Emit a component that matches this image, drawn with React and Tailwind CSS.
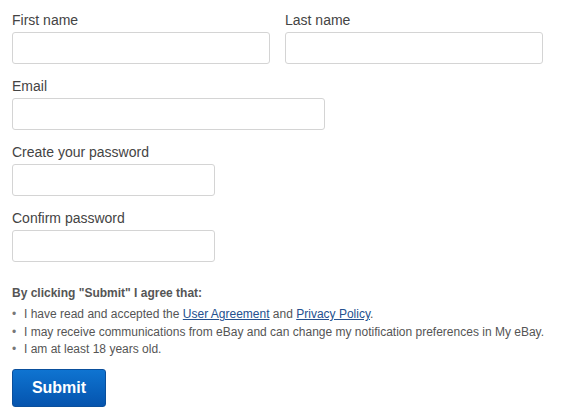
import React from 'react';

const Field = ({ label, width, className = '' }) => (
    <div className={className}>
        <label className="block text-[14px] leading-[16px] text-[#444]">{label}</label>
        <input
            type="text"
            className={`mt-[4px] block h-[32px] ${width} rounded-[3px] border border-[#d4d4d4] bg-white outline-none`}
        />
    </div>
);

const App = () => {
    return (
        <div className="h-[419px] w-[568px] bg-white px-[12px] pt-[12px]" style={{ fontFamily: '"Liberation Sans", Arial, sans-serif' }}>
            {/* Name row */}
            <div className="flex gap-[15px]">
                <Field label="First name" width="w-[258px]" />
                <Field label="Last name" width="w-[258px]" />
            </div>

            <Field label="Email" width="w-[313px]" className="mt-[14px]" />
            <Field label="Create your password" width="w-[203px]" className="mt-[14px]" />
            <Field label="Confirm password" width="w-[203px]" className="mt-[14px]" />

            {/* Agreement */}
            <div className="mt-[24px] text-[12px] text-[#555]">
                <p className="font-bold leading-[14px]">By clicking "Submit" I agree that:</p>
                <ul className="mt-[6px] list-none">
                    <li className="flex leading-[17.5px]">
                        <span className="w-[12px] text-[#777]">•</span>
                        <span>
                            I have read and accepted the{' '}
                            <a href="#" className="text-[#24508f] underline">User Agreement</a> and{' '}
                            <a href="#" className="text-[#24508f] underline">Privacy Policy</a>.
                        </span>
                    </li>
                    <li className="flex leading-[17.5px]">
                        <span className="w-[12px] text-[#777]">•</span>
                        <span>I may receive communications from eBay and can change my notification preferences in My eBay.</span>
                    </li>
                    <li className="flex leading-[17.5px]">
                        <span className="w-[12px] text-[#777]">•</span>
                        <span>I am at least 18 years old.</span>
                    </li>
                </ul>
            </div>

            <button className="mt-[10px] h-[38px] w-[94px] rounded-[3px] border border-[#0a4f9c] bg-gradient-to-b from-[#0f74d1] to-[#0654ae] text-[16px] font-bold text-white">
                Submit
            </button>
        </div>
    );
};

export default App;
